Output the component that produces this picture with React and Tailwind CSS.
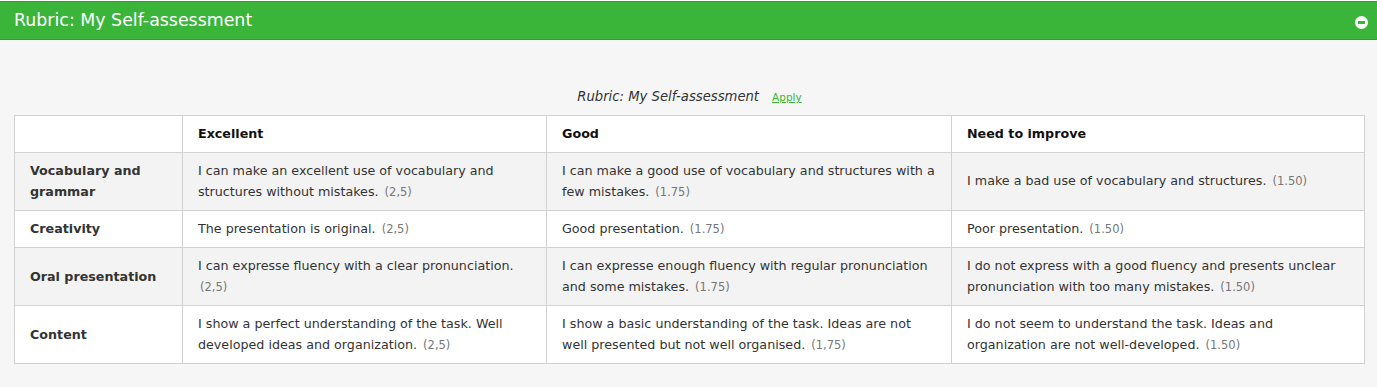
import React from 'react';

const rows = [
  {
    label: 'Vocabulary and grammar',
    cells: [
      ['I can make an excellent use of vocabulary and structures without mistakes.', '(2,5)'],
      ['I can make a good use of vocabulary and structures with a few mistakes.', '(1.75)'],
      ['I make a bad use of vocabulary and structures.', '(1.50)'],
    ],
  },
  {
    label: 'Creativity',
    cells: [
      ['The presentation is original.', '(2,5)'],
      ['Good presentation.', '(1.75)'],
      ['Poor presentation.', '(1.50)'],
    ],
  },
  {
    label: 'Oral presentation',
    cells: [
      ['I can expresse fluency with a clear pronunciation.', '(2,5)'],
      ['I can expresse enough fluency with regular pronunciation and some mistakes.', '(1.75)'],
      ['I do not express with a good fluency and presents unclear pronunciation with too many mistakes.', '(1.50)'],
    ],
  },
  {
    label: 'Content',
    cells: [
      ['I show a perfect understanding of the task. Well developed ideas and organization.', '(2,5)'],
      ['I show a basic understanding of the task. Ideas are not well presented but not well organised.', '(1,75)'],
      ['I do not seem to understand the task. Ideas and organization are not well-developed.', '(1.50)'],
    ],
  },
];

const levels = ['Excellent', 'Good', 'Need to improve'];

const App = () => {
  return (
    <div className="w-[1377px] h-[387px] bg-[#f6f6f6] font-['DejaVu_Sans',sans-serif] text-[#333]">
      {/* panel header */}
      <div className="mt-px h-[39px] bg-[#3ab53a] border-y border-[#2e9c3c] flex items-center justify-between pl-[14px] pr-[9px]">
        <h2 className="text-[17.4px] text-white leading-none">Rubric: My Self-assessment</h2>
        <span className="w-[13px] h-[13px] rounded-full bg-white flex items-center justify-center mt-[4px]">
          <span className="w-[7px] h-[3px] bg-[#3ab53a]" />
        </span>
      </div>

      <div className="pl-[14px] pr-[13px] pt-[47px]">
        <div className="flex items-baseline justify-center gap-[13px] mb-[8px] pl-[1px]">
          <span className="italic text-[13.2px] text-[#333]">Rubric: My Self-assessment</span>
          <a className="text-[10.5px] text-[#3ab53a] underline">Apply</a>
        </div>

        <table className="w-[1350px] border-collapse table-fixed text-[12.7px] leading-[21px]">
          <colgroup>
            <col className="w-[168px]" />
            <col className="w-[364px]" />
            <col className="w-[405px]" />
            <col className="w-[413px]" />
          </colgroup>
          <thead>
            <tr className="bg-white h-[37px]">
              <th className="border border-[#d2d2d2]" />
              {levels.map((l) => (
                <th key={l} className="border border-[#d2d2d2] text-left font-bold text-[#111] px-[15px] py-[7px]">
                  {l}
                </th>
              ))}
            </tr>
          </thead>
          <tbody>
            {rows.map((r, i) => (
              <tr key={r.label} className={i % 2 === 0 ? 'bg-[#f3f3f3]' : 'bg-white'}>
                <td className="border border-[#d2d2d2] font-bold px-[15px] py-[7px] align-middle">{r.label}</td>
                {r.cells.map(([text, score], j) => (
                  <td key={j} className="border border-[#d2d2d2] px-[15px] py-[7px] align-middle">
                    {text} <span className="text-[11.5px] text-[#777] ml-[2px]">{score}</span>
                  </td>
                ))}
              </tr>
            ))}
          </tbody>
        </table>
      </div>
    </div>
  );
};

export default App;
